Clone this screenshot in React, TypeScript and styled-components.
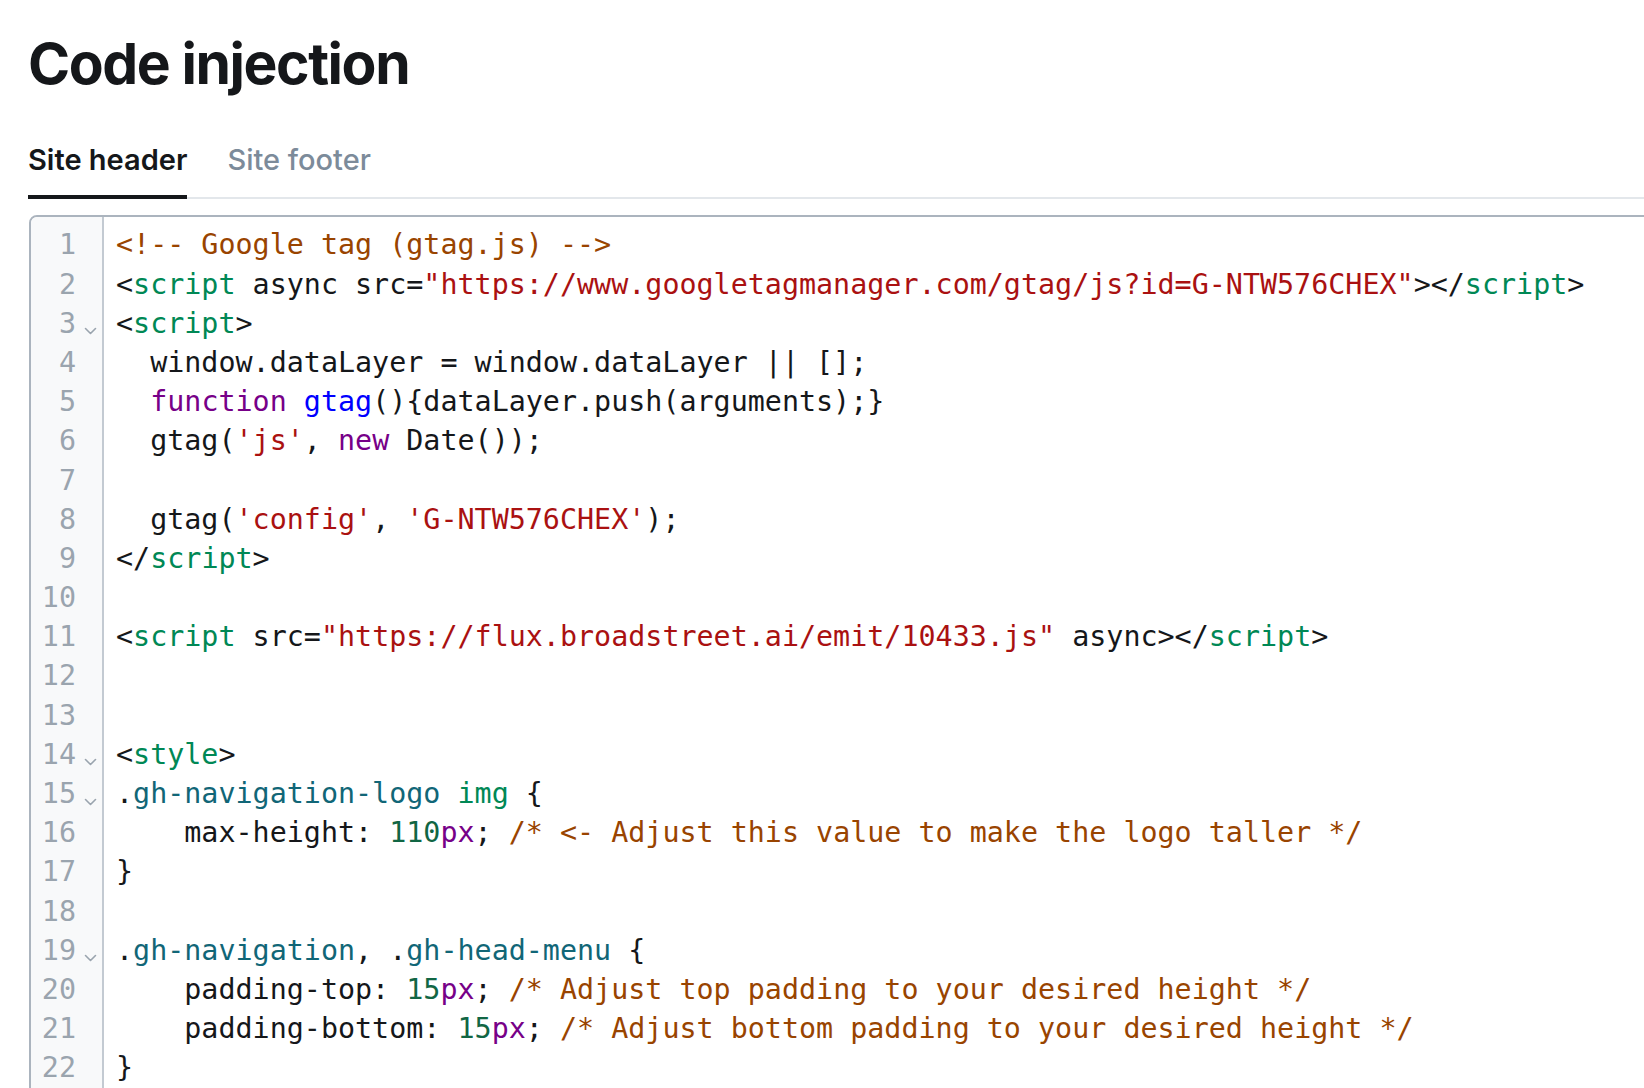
import React from "react";
import styled, { createGlobalStyle } from "styled-components";

const GlobalStyle = createGlobalStyle`
  html, body {
    margin: 0;
    padding: 0;
    background: #ffffff;
    overflow: hidden;
  }
  * { box-sizing: border-box; }
`;

const Page = styled.div`
  padding: 30px 0 0 28px;
  font-family: Inter, "Noto Sans", sans-serif;
  color: #15171a;
  width: 1644px;
  height: 1088px;
  overflow: hidden;
`;

const Title = styled.h1`
  margin: 0;
  font-family: Inter, "Noto Sans", sans-serif;
  font-weight: 700;
  font-size: 57px;
  line-height: 68px;
  letter-spacing: -0.025em;
  color: #15171a;
`;

const TabBar = styled.div`
  display: flex;
  gap: 40px;
  margin-top: 46px;
  border-bottom: 2px solid #e3e7eb;
  margin-right: -40px;
`;

const Tab = styled.div<{ $active?: boolean }>`
  font-size: 29px;
  line-height: 32px;
  font-weight: ${(p) => (p.$active ? 600 : 500)};
  letter-spacing: 0;
  color: ${(p) => (p.$active ? "#15171a" : "#7c8b9a")};
  padding: 0 0 19px;
  margin-bottom: -2px;
  border-bottom: 4px solid ${(p) => (p.$active ? "#15171a" : "transparent")};
`;

const Editor = styled.div`
  margin-top: 16px;
  margin-left: 1px;
  margin-right: -60px;
  height: 900px;
  display: flex;
  border: 2px solid #abb4be;
  border-radius: 8px;
  overflow: hidden;
  font-family: "DejaVu Sans Mono", "Liberation Mono", monospace;
  font-size: 28.36px;
`;

const Gutter = styled.div`
  width: 73px;
  flex: none;
  background: #f8f9fa;
  border-right: 2px solid #c3cad2;
  padding-top: 8.4px;
`;

const GutterRow = styled.div`
  display: flex;
  height: 39.2px;
  line-height: 39.2px;
`;

const LineNo = styled.span`
  width: 45px;
  text-align: right;
  color: #9aa4ae;
`;

const FoldCell = styled.span`
  flex: 1;
  display: flex;
  justify-content: center;
  align-items: center;
  padding-top: 16px;
  padding-left: 3px;
`;

const Code = styled.div`
  flex: 1;
  padding-top: 8.4px;
  padding-left: 12px;
`;

const CodeLine = styled.div`
  height: 39.2px;
  line-height: 39.2px;
  white-space: pre;
  color: #15171a;
`;

const tokenColors: Record<string, string> = {
  p: "#15171a",
  c: "#994400",
  t: "#008855",
  s: "#aa1111",
  k: "#770088",
  d: "#0000ff",
  cl: "#116677",
  n: "#116644",
  u: "#770088",
};

const Tok = styled.span<{ $kind: string }>`
  color: ${(p) => tokenColors[p.$kind] || "#15171a"};
`;

type Token = [string, string];
type Line = { tokens: Token[]; fold?: boolean };

const lines: Line[] = [
  { tokens: [["c", "<!-- Google tag (gtag.js) -->"]] },
  {
    tokens: [
      ["p", "<"],
      ["t", "script"],
      ["p", " async src="],
      ["s", '"https://www.googletagmanager.com/gtag/js?id=G-NTW576CHEX"'],
      ["p", "></"],
      ["t", "script"],
      ["p", ">"],
    ],
  },
  { tokens: [["p", "<"], ["t", "script"], ["p", ">"]], fold: true },
  { tokens: [["p", "  window.dataLayer = window.dataLayer || [];"]] },
  {
    tokens: [
      ["p", "  "],
      ["k", "function"],
      ["p", " "],
      ["d", "gtag"],
      ["p", "(){dataLayer.push(arguments);}"],
    ],
  },
  {
    tokens: [
      ["p", "  gtag("],
      ["s", "'js'"],
      ["p", ", "],
      ["k", "new"],
      ["p", " Date());"],
    ],
  },
  { tokens: [] },
  {
    tokens: [
      ["p", "  gtag("],
      ["s", "'config'"],
      ["p", ", "],
      ["s", "'G-NTW576CHEX'"],
      ["p", ");"],
    ],
  },
  { tokens: [["p", "</"], ["t", "script"], ["p", ">"]] },
  { tokens: [] },
  {
    tokens: [
      ["p", "<"],
      ["t", "script"],
      ["p", " src="],
      ["s", '"https://flux.broadstreet.ai/emit/10433.js"'],
      ["p", " async></"],
      ["t", "script"],
      ["p", ">"],
    ],
  },
  { tokens: [] },
  { tokens: [] },
  { tokens: [["p", "<"], ["t", "style"], ["p", ">"]], fold: true },
  {
    tokens: [
      ["p", "."],
      ["cl", "gh-navigation-logo"],
      ["p", " "],
      ["t", "img"],
      ["p", " {"],
    ],
    fold: true,
  },
  {
    tokens: [
      ["p", "    max-height: "],
      ["n", "110"],
      ["u", "px"],
      ["p", "; "],
      ["c", "/* <- Adjust this value to make the logo taller */"],
    ],
  },
  { tokens: [["p", "}"]] },
  { tokens: [] },
  {
    tokens: [
      ["p", "."],
      ["cl", "gh-navigation"],
      ["p", ", ."],
      ["cl", "gh-head-menu"],
      ["p", " {"],
    ],
    fold: true,
  },
  {
    tokens: [
      ["p", "    padding-top: "],
      ["n", "15"],
      ["u", "px"],
      ["p", "; "],
      ["c", "/* Adjust top padding to your desired height */"],
    ],
  },
  {
    tokens: [
      ["p", "    padding-bottom: "],
      ["n", "15"],
      ["u", "px"],
      ["p", "; "],
      ["c", "/* Adjust bottom padding to your desired height */"],
    ],
  },
  { tokens: [["p", "}"]] },
];

const FoldIcon = () => (
  <svg width="13" height="8" viewBox="0 0 13 8" fill="none">
    <polyline
      points="1.5,1.5 6.5,6.5 11.5,1.5"
      stroke="#9aa4ae"
      strokeWidth="1.6"
      strokeLinecap="round"
      strokeLinejoin="round"
    />
  </svg>
);

export default function App() {
  return (
    <>
      <GlobalStyle />
      <Page>
        <Title>Code injection</Title>
        <TabBar>
          <Tab $active>Site header</Tab>
          <Tab>Site footer</Tab>
        </TabBar>
        <Editor>
          <Gutter>
            {lines.map((l, i) => (
              <GutterRow key={i}>
                <LineNo>{i + 1}</LineNo>
                <FoldCell>{l.fold ? <FoldIcon /> : null}</FoldCell>
              </GutterRow>
            ))}
          </Gutter>
          <Code>
            {lines.map((l, i) => (
              <CodeLine key={i}>
                {l.tokens.length === 0
                  ? " "
                  : l.tokens.map(([k, t], j) => (
                      <Tok key={j} $kind={k}>
                        {t}
                      </Tok>
                    ))}
              </CodeLine>
            ))}
          </Code>
        </Editor>
      </Page>
    </>
  );
}
